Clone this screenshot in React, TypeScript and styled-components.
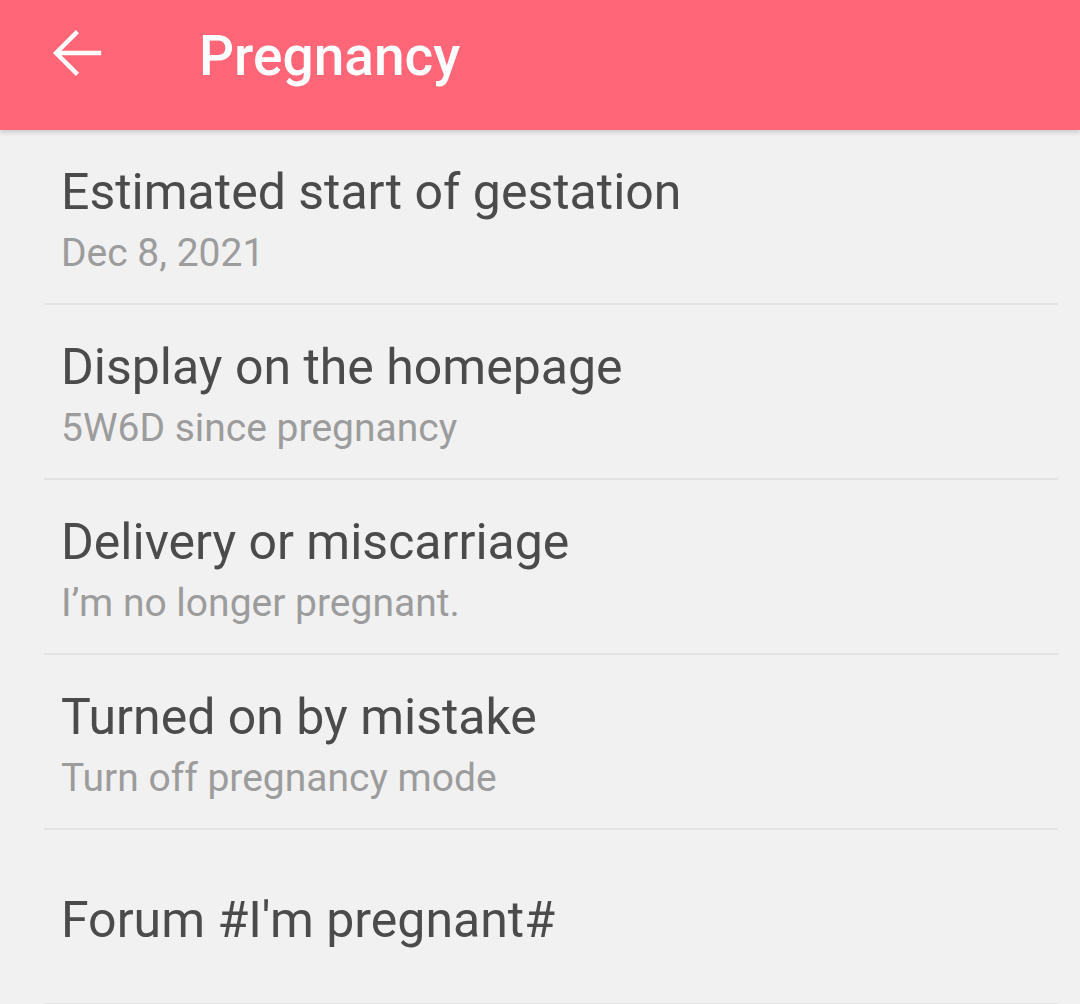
import React from "react";
import styled, { createGlobalStyle } from "styled-components";

const GlobalStyle = createGlobalStyle`
  html, body {
    margin: 0;
    padding: 0;
    background: #f1f1f1;
    font-family: Roboto, "Noto Sans", "Liberation Sans", sans-serif;
  }
  * { box-sizing: border-box; }
`;

const Screen = styled.div`
  width: 1080px;
  height: 1004px;
  overflow: hidden;
  background: #f1f1f1;
  display: flex;
  flex-direction: column;
`;

const AppBar = styled.header`
  position: relative;
  z-index: 1;
  height: 130px;
  flex: 0 0 130px;
  background: #ff6677;
  display: flex;
  align-items: center;
  padding-left: 44px;
  box-shadow: 0 2px 5px rgba(0, 0, 0, 0.18);
`;

const BackButton = styled.button`
  width: 66px;
  height: 66px;
  padding: 0;
  margin: -24px 0 0 0;
  border: none;
  background: transparent;
  display: flex;
  align-items: center;
  justify-content: center;
  cursor: pointer;
`;

const Title = styled.h1`
  margin: -18px 0 0 89px;
  font-family: Roboto, "Noto Sans", sans-serif;
  font-weight: 500;
  font-size: 55px;
  line-height: 64px;
  color: #ffffff;
  letter-spacing: 0;
`;

const List = styled.div`
  display: flex;
  flex-direction: column;
`;

const Row = styled.div<{ $single?: boolean }>`
  height: 175px;
  flex: 0 0 175px;
  margin: 0 22px 0 44px;
  padding: ${(p) => (p.$single ? "0" : "34px")} 0 0 17px;
  border-bottom: 2px solid #e3e3e3;
  display: flex;
  flex-direction: column;
  justify-content: ${(p) => (p.$single ? "center" : "flex-start")};
`;

const RowTitle = styled.div<{ $single?: boolean }>`
  font-size: 50px;
  line-height: 56px;
  color: #4b4b4b;
  margin-top: ${(p) => (p.$single ? "6px" : "0")};
`;

const RowSub = styled.div`
  margin-top: 11px;
  font-size: 39px;
  line-height: 44px;
  color: #9c9c9c;
`;

const BackArrow = () => (
  <svg width="66" height="66" viewBox="0 0 24 24" fill="none">
    <path
      d="M20 12H4.8M11.6 4.8 4.4 12l7.2 7.2"
      stroke="#ffffff"
      strokeWidth="1.6"
      strokeLinecap="square"
    />
  </svg>
);

const items = [
  { title: "Estimated start of gestation", sub: "Dec 8, 2021" },
  { title: "Display on the homepage", sub: "5W6D since pregnancy" },
  { title: "Delivery or miscarriage", sub: "I’m no longer pregnant." },
  { title: "Turned on by mistake", sub: "Turn off pregnancy mode" },
  { title: "Forum #I'm pregnant#" },
];

export default function App() {
  return (
    <>
      <GlobalStyle />
      <Screen>
        <AppBar>
          <BackButton aria-label="Back">
            <BackArrow />
          </BackButton>
          <Title>Pregnancy</Title>
        </AppBar>
        <List>
          {items.map((it) => (
            <Row key={it.title} $single={!it.sub}>
              <RowTitle $single={!it.sub}>{it.title}</RowTitle>
              {it.sub && <RowSub>{it.sub}</RowSub>}
            </Row>
          ))}
        </List>
      </Screen>
    </>
  );
}
